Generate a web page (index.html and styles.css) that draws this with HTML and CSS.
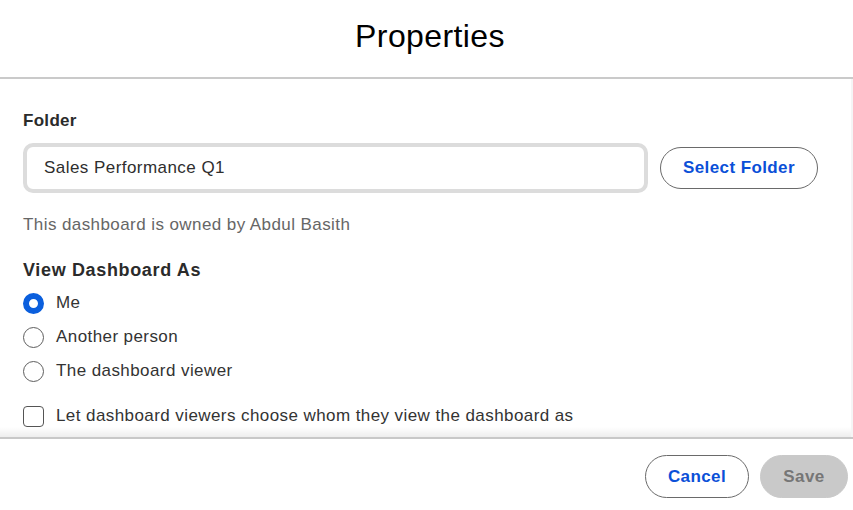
FILE: index.html
```html
<!DOCTYPE html>
<html lang="en">
<head>
<meta charset="utf-8">
<title>Properties</title>
<link rel="stylesheet" href="styles.css">
</head>
<body>
<div class="dialog">
  <header class="header">
    <h1 class="title">Properties</h1>
  </header>
  <main class="body">
    <div class="label">Folder</div>
    <div class="folder-row">
      <div class="input">Sales Performance Q1</div>
      <button class="btn btn-outline select-btn">Select Folder</button>
    </div>
    <p class="owner">This dashboard is owned by Abdul Basith</p>
    <div class="heading">View Dashboard As</div>
    <ul class="options">
      <li class="option"><span class="radio checked"></span><span class="opt-text">Me</span></li>
      <li class="option"><span class="radio"></span><span class="opt-text">Another person</span></li>
      <li class="option"><span class="radio"></span><span class="opt-text">The dashboard viewer</span></li>
    </ul>
    <div class="option check-row"><span class="checkbox"></span><span class="opt-text">Let dashboard viewers choose whom they view the dashboard as</span></div>
    <div class="fade"></div>
  </main>
  <footer class="footer">
    <button class="btn btn-outline cancel-btn">Cancel</button>
    <button class="btn btn-disabled save-btn">Save</button>
  </footer>
</div>
</body>
</html>
```

FILE: styles.css
```css
* { box-sizing: border-box; }
html, body { margin: 0; padding: 0; }
body {
  background: #fff;
  font-family: "Liberation Sans", Arial, sans-serif;
  color: #333;
}
.dialog {
  width: 853px;
  height: 510px;
  display: flex;
  flex-direction: column;
  overflow: hidden;
}
.header {
  height: 79px;
  flex: none;
  border-bottom: 2px solid #cacaca;
  display: flex;
  justify-content: center;
  padding: 16px 0 0 7px;
}
.title {
  margin: 0;
  font-size: 32px;
  letter-spacing: 0.4px;
  line-height: 40px;
  font-weight: 400;
  color: #000;
}
.body {
  position: relative;
  height: 358px;
  flex: none;
  padding: 32px 23px 0 23px;
  overflow: hidden;
  border-right: 2px solid #f5f5f5;
}
.label {
  font-size: 17px;
  font-weight: 700;
  letter-spacing: 0.3px;
  line-height: 20px;
  color: #2b2b2b;
}
.folder-row {
  margin-top: 12px;
  display: flex;
  align-items: center;
  gap: 12px;
}
.input {
  width: 625px;
  height: 50px;
  border: 4px solid #dcdcdc;
  border-radius: 10px;
  padding-left: 17px;
  display: flex;
  align-items: center;
  font-size: 17px;
  letter-spacing: 0.45px;
  color: #2e2e2e;
}
.btn {
  font-family: "Liberation Sans", Arial, sans-serif;
  font-size: 17px;
  font-weight: 700;
  letter-spacing: 0.4px;
  border-radius: 22px;
  padding: 0;
  cursor: pointer;
}
.btn-outline {
  background: #fff;
  border: 1px solid #6a6a6a;
  color: #0b50d8;
}
.btn-disabled {
  background: #c9c9c9;
  border: 1px solid #c9c9c9;
  color: #767676;
}
.select-btn { width: 158px; height: 42px; }
.owner {
  margin: 22px 0 0 0;
  font-size: 17px;
  letter-spacing: 0.42px;
  line-height: 20px;
  color: #666;
}
.heading {
  margin-top: 25px;
  font-size: 18px;
  font-weight: 700;
  letter-spacing: 0.65px;
  line-height: 20px;
  color: #2b2b2b;
}
.options {
  list-style: none;
  margin: 6px 0 0 0;
  padding: 0;
}
.option {
  height: 34px;
  display: flex;
  align-items: center;
  gap: 12px;
}
.opt-text {
  font-size: 17px;
  letter-spacing: 0.42px;
  color: #333;
}
.radio {
  width: 21px;
  height: 21px;
  flex: none;
  border-radius: 50%;
  border: 1px solid #5e5e5e;
  background: #fff;
}
.radio.checked {
  border: 6px solid #0b5fdd;
}
.check-row { margin-top: 11px; }
.checkbox {
  width: 21px;
  height: 21px;
  flex: none;
  border: 1px solid #555;
  border-radius: 4px;
  background: #fff;
}
.fade {
  position: absolute;
  left: 0;
  right: 0;
  bottom: 0;
  height: 10px;
  background: linear-gradient(to bottom, rgba(0,0,0,0), rgba(0,0,0,0.07));
}
.footer {
  flex: 1;
  border-top: 2px solid #c8c8c8;
  display: flex;
  justify-content: flex-end;
  align-items: flex-start;
  gap: 11px;
  padding: 16px 5px 0 0;
}
.cancel-btn { width: 104px; height: 43px; }
.save-btn { width: 88px; height: 43px; }
```
